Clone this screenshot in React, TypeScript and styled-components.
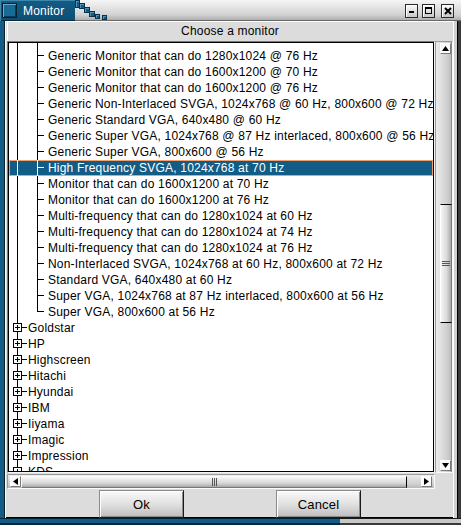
import React from 'react';
import styled, { createGlobalStyle } from 'styled-components';

const BLUE = '#125c86';

const Global = createGlobalStyle`
  html, body { margin: 0; padding: 0; background: #dcdcdc; }
  body { font-family: "Liberation Sans", Arial, sans-serif; }
`;

const Window = styled.div`
  width: 461px;
  height: 525px;
  display: flex;
  flex-direction: column;
  background: #dcdcdc;
  overflow: hidden;
  font-family: "Liberation Sans", Arial, sans-serif;
  font-size: 12px;
  color: #000;
`;

const TitleBar = styled.div`
  height: 21px;
  flex: 0 0 21px;
  display: flex;
  align-items: stretch;
  background: linear-gradient(#f6f6f6, #d2d2d2 70%, #a8a8a8);
  box-shadow: inset 0 -1px 0 #6a6a6a;
`;

const TitleTab = styled.div`
  width: 75px;
  background: linear-gradient(${BLUE}, #0d4f74);
  box-shadow: inset 1px 1px 0 #3f86ad, inset 0 -1px 0 #062c42;
  display: flex;
  align-items: center;
  padding-left: 2px;
  gap: 6px;
  color: #fff;
  font-size: 12px;
  letter-spacing: 0.2px;
  box-sizing: border-box;
`;

const TitleIcon = styled.div`
  width: 15px;
  height: 15px;
  box-sizing: border-box;
  border: 1px solid #03202f;
  background: #1a6a96;
  box-shadow: inset 1px 1px 0 #6fa8c8, inset -1px -1px 0 #0a3a55;
`;

const Spacer = styled.div`
  flex: 1;
`;

const TitleButtons = styled.div`
  display: flex;
  align-items: center;
  gap: 3px;
  padding-right: 7px;
`;

const TitleBtn = styled.div<{ $gapLeft?: number }>`
  width: 13px;
  height: 14px;
  box-sizing: border-box;
  margin-left: ${(p) => p.$gapLeft ?? 0}px;
  border: 1px solid #2a2a2a;
  background: linear-gradient(#fbfbfb, #c6c6c6);
  box-shadow: inset 1px 1px 0 #fff;
  display: flex;
  align-items: center;
  justify-content: center;
`;

const Body = styled.div`
  flex: 1;
  display: flex;
  flex-direction: column;
  border-left: 4px solid ${BLUE};
  border-right: 3px solid #3a3a3a;
  padding: 0 5px 0 3px;
  box-shadow: inset 1px 0 0 #04202f, inset 2px 0 0 #fff, inset -1px 0 0 #000, inset -4px 0 0 #d0d0d0, inset -5px 0 0 #fff, inset 0 -1px 0 #000;
  min-height: 0;
`;

const Header = styled.div`
  height: 20px;
  flex: 0 0 20px;
  display: flex;
  align-items: center;
  justify-content: center;
  background: #dcdcdc;
  box-shadow: inset 0 1px 0 #fff, inset 1px 0 0 #fff;
  font-size: 12px;
  letter-spacing: 0.2px;
`;

const ScrollArea = styled.div`
  height: 448px;
  flex: 0 0 448px;
  display: grid;
  grid-template-columns: 428px 18px;
  grid-template-rows: 432px 16px;
`;

const ListFrame = styled.div`
  border: 1px solid;
  border-color: #7a7a7a #f4f4f4 #f4f4f4 #7a7a7a;
  display: flex;
  min-width: 0;
`;

const ListBox = styled.div`
  flex: 1;
  min-width: 0;
  border: 1px solid #000;
  background: #fff;
  overflow: hidden;
  & > svg { display: block; }
`;

const Row = styled.div<{ $selected?: boolean }>`
  height: 16px;
  display: flex;
  align-items: center;
  white-space: nowrap;
  line-height: 16px;
  background: ${(p) => (p.$selected ? BLUE : 'transparent')};
  box-shadow: ${(p) => (p.$selected ? 'inset 0 0 0 1px #f0a070' : 'none')};
  color: ${(p) => (p.$selected ? '#fff' : '#000')};
  & > svg { flex: 0 0 auto; }
`;

const Label = styled.span`
  font-size: 12px;
  letter-spacing: 0.2px;
`;

const VScroll = styled.div`
  grid-row: 1 / 2;
  grid-column: 2 / 3;
  display: flex;
  flex-direction: column;
  align-items: center;
  padding: 1px 0 1px 3px;
  box-sizing: border-box;
  background: linear-gradient(to right, #ececec, #cfcfcf 70%, #b8b8b8);
  border: 1px solid;
  border-color: #9a9a9a #fafafa #fafafa #9a9a9a;
  box-shadow: inset -1px 0 0 #8a8a8a;
`;

const HScroll = styled.div`
  grid-row: 2 / 3;
  grid-column: 1 / 2;
  display: flex;
  align-items: center;
  padding: 0 2px 0 2px;
  box-sizing: border-box;
  background: linear-gradient(#ececec, #cfcfcf 70%, #b8b8b8);
  border: 1px solid;
  border-color: #9a9a9a #fafafa #fafafa #9a9a9a;
  margin-top: 1px;
`;

const ArrowBtn = styled.div<{ $end?: boolean }>`
  width: 11px;
  height: 11px;
  flex: 0 0 11px;
  box-sizing: border-box;
  background: #fafafa;
  border: 1px solid;
  border-color: #fff #7a7a7a #7a7a7a #fff;
  display: flex;
  align-items: center;
  justify-content: center;
  margin-top: ${(p) => (p.$end ? 'auto' : '0')};
`;

const HArrowBtn = styled(ArrowBtn)<{ $right?: boolean }>`
  margin-top: 0;
  margin-left: ${(p) => (p.$right ? 'auto' : '0')};
`;

const VThumb = styled.div<{ $top: number; $len: number }>`
  width: 12px;
  height: ${(p) => p.$len}px;
  margin-top: ${(p) => p.$top}px;
  box-sizing: border-box;
  background: linear-gradient(to right, #f6f6f6, #d8d8d8 60%, #a8a8a8);
  border-top: 1px solid #000;
  border-bottom: 1px solid #000;
  border-left: 1px solid #fff;
  border-right: 1px solid #777;
  display: flex;
  align-items: center;
  justify-content: center;
`;

const HThumb = styled.div<{ $len: number }>`
  height: 12px;
  width: ${(p) => p.$len}px;
  box-sizing: border-box;
  background: linear-gradient(#f6f6f6, #d8d8d8 60%, #a8a8a8);
  border-right: 1px solid #000;
  border-left: 1px solid #fff;
  border-top: 1px solid #fff;
  border-bottom: 1px solid #777;
  display: flex;
  align-items: center;
  justify-content: center;
`;

const ButtonRow = styled.div`
  flex: 1;
  display: flex;
  justify-content: space-evenly;
  align-items: flex-start;
  padding-top: 1px;
`;

const PushButton = styled.button`
  width: 85px;
  height: 28px;
  box-sizing: border-box;
  font-family: "Liberation Sans", Arial, sans-serif;
  font-size: 13px;
  letter-spacing: 0.2px;
  color: #000;
  background: linear-gradient(#fafafa, #dedede 55%, #bdbdbd);
  border: 1px solid;
  border-color: #8a8a8a #1a1a1a #1a1a1a #8a8a8a;
  box-shadow: inset 1px 1px 0 #fff, inset -1px -1px 0 #8c8c8c;
  padding: 0;
`;

const BottomEdge = styled.div`
  height: 7px;
  flex: 0 0 7px;
  display: flex;
`;

const BottomBlue = styled.div`
  width: 340px;
  background: linear-gradient(#03202f 0 1px, ${BLUE} 1px 5px, #04263a 5px);
`;

const BottomGrey = styled.div`
  flex: 1;
  background: linear-gradient(#1a1a1a 0 1px, #c8c8c8 1px 5px, #3a3a3a 5px);
`;

const UpTri = () => (
  <svg width="7" height="5" viewBox="0 0 7 5"><path d="M3.5 0 L7 5 L0 5 Z" fill="#000" /></svg>
);
const DownTri = () => (
  <svg width="7" height="5" viewBox="0 0 7 5"><path d="M0 0 L7 0 L3.5 5 Z" fill="#000" /></svg>
);
const LeftTri = () => (
  <svg width="5" height="7" viewBox="0 0 5 7"><path d="M5 0 L5 7 L0 3.5 Z" fill="#000" /></svg>
);
const RightTri = () => (
  <svg width="5" height="7" viewBox="0 0 5 7"><path d="M0 0 L5 3.5 L0 7 Z" fill="#000" /></svg>
);

const Stairs = () => (
  <svg width="40" height="21" viewBox="0 0 40 21" shapeRendering="crispEdges">
    {[
      [0, 0, 5, 8],
      [4, 3, 6, 6],
      [9, 7, 6, 6],
      [14, 11, 6, 6],
      [20, 14, 5, 5],
      [27, 15, 5, 5],
    ].map(([x, y, w, h], i) => (
      <g key={i}>
        <rect x={x} y={y} width={w} height={h} fill={BLUE} />
        <rect x={x + 0.5} y={y + 0.5} width={w - 1} height={h - 1} fill="none" stroke="#06324c" />
        <path d={`M${x + 1.5} ${y + h - 1.5} V${y + 1.5} H${x + w - 1.5}`} stroke="#4f93b8" fill="none" />
      </g>
    ))}
  </svg>
);

const TopStub = () => (
  <svg width="39" height="5" viewBox="0 0 39 5" shapeRendering="crispEdges" stroke="#000">
    <line x1="8.5" y1="0" x2="8.5" y2="5" />
    <line x1="28.5" y1="0" x2="28.5" y2="5" />
  </svg>
);

const ChildGuide = ({ last }: { last?: boolean }) => (
  <svg width="39" height="16" viewBox="0 0 39 16" shapeRendering="crispEdges" stroke="currentColor">
    <line x1="8.5" y1="0" x2="8.5" y2="16" />
    <line x1="28.5" y1="0" x2="28.5" y2={last ? 8 : 16} />
    <line x1="28.5" y1="7.5" x2="35" y2="7.5" />
  </svg>
);

const MakerGuide = () => (
  <svg width="19" height="16" viewBox="0 0 19 16" shapeRendering="crispEdges" stroke="currentColor">
    <line x1="8.5" y1="0" x2="8.5" y2="3" />
    <line x1="8.5" y1="12" x2="8.5" y2="16" />
    <rect x="4.5" y="3.5" width="8" height="8" fill="#fff" />
    <line x1="6" y1="7.5" x2="11" y2="7.5" />
    <line x1="8.5" y1="5" x2="8.5" y2="10" />
    <line x1="13" y1="7.5" x2="18" y2="7.5" />
  </svg>
);

const children = [
  'Generic Monitor that can do 1280x1024 @ 76 Hz',
  'Generic Monitor that can do 1600x1200 @ 70 Hz',
  'Generic Monitor that can do 1600x1200 @ 76 Hz',
  'Generic Non-Interlaced SVGA, 1024x768 @ 60 Hz, 800x600 @ 72 Hz',
  'Generic Standard VGA, 640x480 @ 60 Hz',
  'Generic Super VGA, 1024x768 @ 87 Hz interlaced, 800x600 @ 56 Hz',
  'Generic Super VGA, 800x600 @ 56 Hz',
  'High Frequency SVGA, 1024x768 at 70 Hz',
  'Monitor that can do 1600x1200 at 70 Hz',
  'Monitor that can do 1600x1200 at 76 Hz',
  'Multi-frequency that can do 1280x1024 at 60 Hz',
  'Multi-frequency that can do 1280x1024 at 74 Hz',
  'Multi-frequency that can do 1280x1024 at 76 Hz',
  'Non-Interlaced SVGA, 1024x768 at 60 Hz, 800x600 at 72 Hz',
  'Standard VGA, 640x480 at 60 Hz',
  'Super VGA, 1024x768 at 87 Hz interlaced, 800x600 at 56 Hz',
  'Super VGA, 800x600 at 56 Hz',
];

const makers = ['Goldstar', 'HP', 'Highscreen', 'Hitachi', 'Hyundai', 'IBM', 'Iiyama', 'Imagic', 'Impression', 'KDS'];

const SELECTED = 7;

export default function App() {
  return (
    <Window>
      <Global />
      <TitleBar>
        <TitleTab>
          <TitleIcon />
          <span>Monitor</span>
        </TitleTab>
        <Stairs />
        <Spacer />
        <TitleButtons>
          <TitleBtn>
            <svg width="7" height="7" viewBox="0 0 7 7"><rect x="1" y="4" width="5" height="2" fill="#000" /></svg>
          </TitleBtn>
          <TitleBtn $gapLeft={1}>
            <svg width="7" height="7" viewBox="0 0 7 7" shapeRendering="crispEdges">
              <rect x="0.5" y="0.5" width="6" height="6" fill="none" stroke="#000" />
              <rect x="0" y="0" width="7" height="2" fill="#000" />
            </svg>
          </TitleBtn>
          <TitleBtn $gapLeft={3}>
            <svg width="8" height="8" viewBox="0 0 8 8"><path d="M1 1 L7 7 M7 1 L1 7" stroke="#000" strokeWidth="2" /></svg>
          </TitleBtn>
        </TitleButtons>
      </TitleBar>
      <Body>
        <Header>Choose a monitor</Header>
        <ScrollArea>
          <ListFrame>
            <ListBox>
              <TopStub />
              {children.map((c, i) => (
                <Row key={c} $selected={i === SELECTED}>
                  <ChildGuide last={i === children.length - 1} />
                  <Label>{c}</Label>
                </Row>
              ))}
              {makers.map((m) => (
                <Row key={m}>
                  <MakerGuide />
                  <Label>{m}</Label>
                </Row>
              ))}
            </ListBox>
          </ListFrame>
          <VScroll>
            <ArrowBtn><UpTri /></ArrowBtn>
            <VThumb $top={150} $len={119}>
              <svg width="8" height="5" viewBox="0 0 8 5" shapeRendering="crispEdges">
                <line x1="0" y1="0.5" x2="8" y2="0.5" stroke="#555" />
                <line x1="0" y1="2.5" x2="8" y2="2.5" stroke="#555" />
                <line x1="0" y1="4.5" x2="8" y2="4.5" stroke="#555" />
              </svg>
            </VThumb>
            <ArrowBtn $end><DownTri /></ArrowBtn>
          </VScroll>
          <HScroll>
            <HArrowBtn><LeftTri /></HArrowBtn>
            <HThumb $len={386}>
              <svg width="5" height="8" viewBox="0 0 5 8" shapeRendering="crispEdges">
                <line x1="0.5" y1="0" x2="0.5" y2="8" stroke="#555" />
                <line x1="2.5" y1="0" x2="2.5" y2="8" stroke="#555" />
                <line x1="4.5" y1="0" x2="4.5" y2="8" stroke="#555" />
              </svg>
            </HThumb>
            <HArrowBtn $right><RightTri /></HArrowBtn>
          </HScroll>
        </ScrollArea>
        <ButtonRow>
          <PushButton>Ok</PushButton>
          <PushButton>Cancel</PushButton>
        </ButtonRow>
      </Body>
      <BottomEdge>
        <BottomBlue />
        <BottomGrey />
      </BottomEdge>
    </Window>
  );
}
